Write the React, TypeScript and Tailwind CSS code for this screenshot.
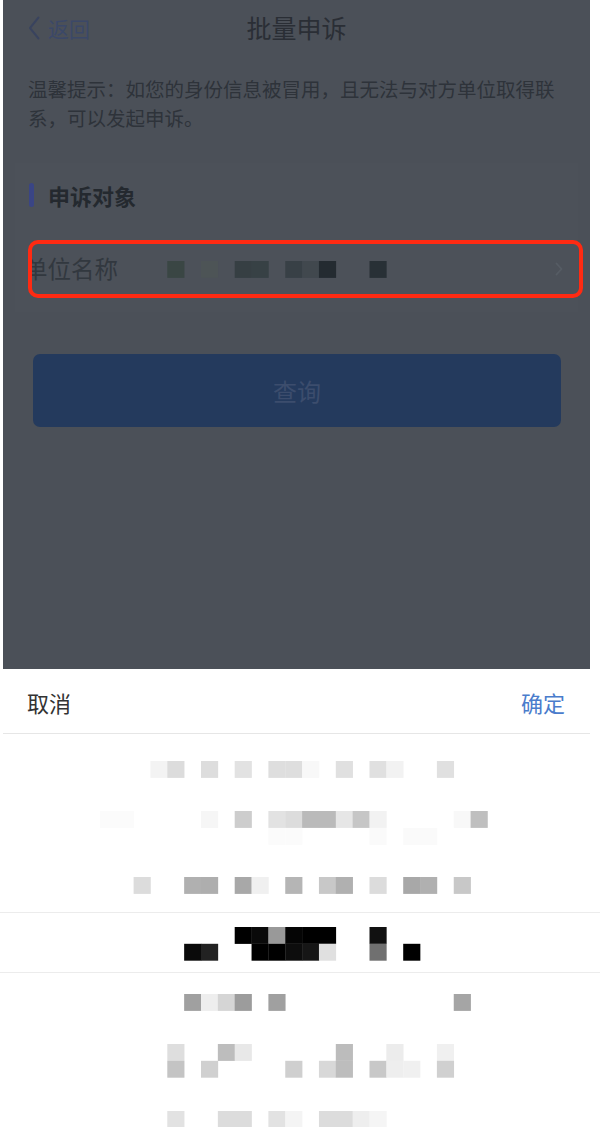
import React from "react";

type Cell = [number, string];

const X0 = 133.6;
const P = 16.85;

function MosaicRow({ cells, y }: { cells: Cell[]; y: number }) {
  return (
    <>
      {cells.map(([c, color], i) => (
        <rect key={i} x={X0 + P * c} y={y} width={P + 0.3} height={16.9} fill={color} />
      ))}
    </>
  );
}

const row1: Cell[] = [
  [1, "#f3f3f3"], [2, "#dcdcdc"], [4, "#dddddd"], [6, "#e2e2e2"], [8, "#dedede"], [9, "#dedede"],
  [10, "#f8f8f8"], [12, "#e0e0e0"], [14, "#e0e0e0"], [15, "#f2f2f2"], [18, "#e0e0e0"],
];
const row2: Cell[] = [
  [-2, "#fbfbfb"], [-1, "#fbfbfb"], [4, "#f6f6f6"], [6, "#cdcdcd"], [8, "#e2e2e2"], [9, "#dcdcdc"],
  [10, "#bababa"], [11, "#bababa"], [12, "#e6e6e6"], [13, "#c6c6c6"], [14, "#f2f2f2"], [19, "#f8f8f8"], [20, "#bfbfbf"],
];
const row2b: Cell[] = [[8, "#fbfbfb"], [9, "#fbfbfb"], [14, "#fafafa"], [16, "#fafafa"], [17, "#fafafa"]];
const row3: Cell[] = [
  [0, "#dcdcdc"], [3, "#b0b0b0"], [4, "#aeaeae"], [6, "#a8a8a8"], [7, "#f0f0f0"], [9, "#b5b5b5"],
  [11, "#c8c8c8"], [12, "#b0b0b0"], [14, "#dcdcdc"], [16, "#a8a8a8"], [17, "#b0b0b0"], [19, "#c8c8c8"],
];
const selTop: Cell[] = [
  [6, "#000000"], [7, "#0a0a0a"], [8, "#999999"], [9, "#050505"], [10, "#000000"], [11, "#000000"], [14, "#111111"],
];
const selBot: Cell[] = [
  [3, "#0a0a0a"], [4, "#222222"], [7, "#000000"], [8, "#000000"], [9, "#0d0d0d"], [10, "#161616"],
  [11, "#e0e0e0"], [14, "#707070"], [16, "#000000"],
];
const row5: Cell[] = [
  [3, "#a0a0a0"], [4, "#eeeeee"], [5, "#d5d5d5"], [6, "#9c9c9c"], [8, "#a0a0a0"], [19, "#a5a5a5"],
];
const row6a: Cell[] = [
  [2, "#dedede"], [5, "#bdbdbd"], [6, "#e8e8e8"], [12, "#bcbcbc"], [15, "#ececec"], [18, "#f0f0f0"],
];
const row6b: Cell[] = [
  [2, "#c4c4c4"], [4, "#d0d0d0"], [9, "#cfcfcf"], [11, "#d8d8d8"], [12, "#bdbdbd"], [14, "#c8c8c8"],
  [15, "#eeeeee"], [16, "#f0f0f0"], [18, "#d0d0d0"],
];
const row7: Cell[] = [
  [2, "#e2e2e2"], [5, "#dcdcdc"], [6, "#dcdcdc"], [8, "#e2e2e2"], [9, "#f4f4f4"], [11, "#dcdcdc"],
  [12, "#dcdcdc"], [13, "#eeeeee"], [14, "#f5f5f5"],
];

const valueCells: Cell[] = [
  [2, "#3a4644"], [4, "#4d5456"], [6, "#363f43"], [7, "#374145"], [9, "#384046"], [10, "#41484e"], [11, "#242b31"], [14, "#283036"],
];

export default function App() {
  return (
    <div className="w-[600px] h-[1127px] bg-white overflow-hidden font-['Noto_Sans_CJK_SC',sans-serif]">
      {/* dimmed page */}
      <div className="ml-[3px] w-[587px] h-[669px] bg-[#4b5058] flex flex-col">
        {/* nav bar */}
        <div className="h-[56px] grid grid-cols-[1fr_auto_1fr] items-center">
          <div className="flex items-center pl-[25px]">
            <svg width="12" height="24" viewBox="0 0 12 24" className="mr-[8px]">
              <path d="M10.5 1.5 L2 12 L10.5 22.5" fill="none" stroke="#39435e" strokeWidth="2" strokeLinecap="round" strokeLinejoin="round" />
            </svg>
            <span className="text-[21px] leading-none text-[#3b4868]">返回</span>
          </div>
          <div className="text-[25px] leading-none text-[#2a2e35] pb-[1px]">批量申诉</div>
          <div />
        </div>

        {/* tip */}
        <div className="mt-[18px] pl-[25px] w-[568px] text-[19.5px] leading-[29px] text-[#2e333a]">
          温馨提示：如您的身份信息被冒用，且无法与对方单位取得联系，可以发起申诉。
        </div>

        {/* card */}
        <div className="mt-[31px] mx-[12px] bg-[#4c5159] pt-[20px] pb-[14px]">
          <div className="flex items-center h-[24px] pl-[14px]">
            <div className="w-[5px] h-[24px] rounded-full bg-[#3a4585]" />
            <div className="ml-[14px] text-[22px] leading-none font-bold text-[#24292f]">申诉对象</div>
          </div>

          <div className="relative mt-[33px] ml-[13px] w-[555px] h-[58px]">
            <div className="h-full overflow-hidden flex items-center">
              <span className="-ml-[4px] w-[143px] shrink-0 text-[23.5px] leading-none text-[#32383f]">单位名称</span>
              <svg width="240" height="18" viewBox="167 0 240 18" className="mt-[1px] shrink-0">
                <MosaicRow cells={valueCells} y={0} />
              </svg>
              <div className="flex-1" />
              <svg width="8" height="14" viewBox="0 0 8 14" className="mr-[20px] shrink-0">
                <path d="M1.5 1.5 L6.5 7 L1.5 12.5" fill="none" stroke="#565c64" strokeWidth="1.8" strokeLinecap="round" strokeLinejoin="round" />
              </svg>
            </div>
            <div className="absolute inset-0 border-[4px] border-[#ff2a12] rounded-[10px]" />
          </div>
        </div>

        {/* query button */}
        <div className="mt-[42px] ml-[30px] w-[528px] h-[73px] rounded-[7px] bg-[#243a5d] flex items-center justify-center">
          <span className="text-[24px] leading-none text-[#3c4d6d]">查询</span>
        </div>
      </div>

      {/* picker sheet */}
      <div className="bg-white">
        <div className="ml-[3px] w-[587px] h-[65px] flex items-center justify-between px-[24px] pt-[1px] border-b border-[#e6e6e6]">
          <span className="text-[22px] leading-none text-[#333333]">取消</span>
          <span className="text-[22px] leading-none text-[#4a7ccc] mr-[1px]">确定</span>
        </div>
        <div className="flex flex-col">
          <svg width="600" height="178" viewBox="0 735 600 178" className="block">
            <MosaicRow cells={row1} y={762} />
            <MosaicRow cells={row2} y={812} />
            <MosaicRow cells={row2b} y={829} />
            <MosaicRow cells={row3} y={878} />
          </svg>
          <div className="h-[61px] border-y border-[#ececec]">
            <svg width="600" height="59" viewBox="0 914 600 59" className="block">
              <MosaicRow cells={selTop} y={928} />
              <MosaicRow cells={selBot} y={944.8} />
            </svg>
          </div>
          <svg width="600" height="154" viewBox="0 974 600 154" className="block">
            <MosaicRow cells={row5} y={995} />
            <MosaicRow cells={row6a} y={1045} />
            <MosaicRow cells={row6b} y={1061.8} />
            <MosaicRow cells={row7} y={1112} />
          </svg>
        </div>
      </div>
    </div>
  );
}
